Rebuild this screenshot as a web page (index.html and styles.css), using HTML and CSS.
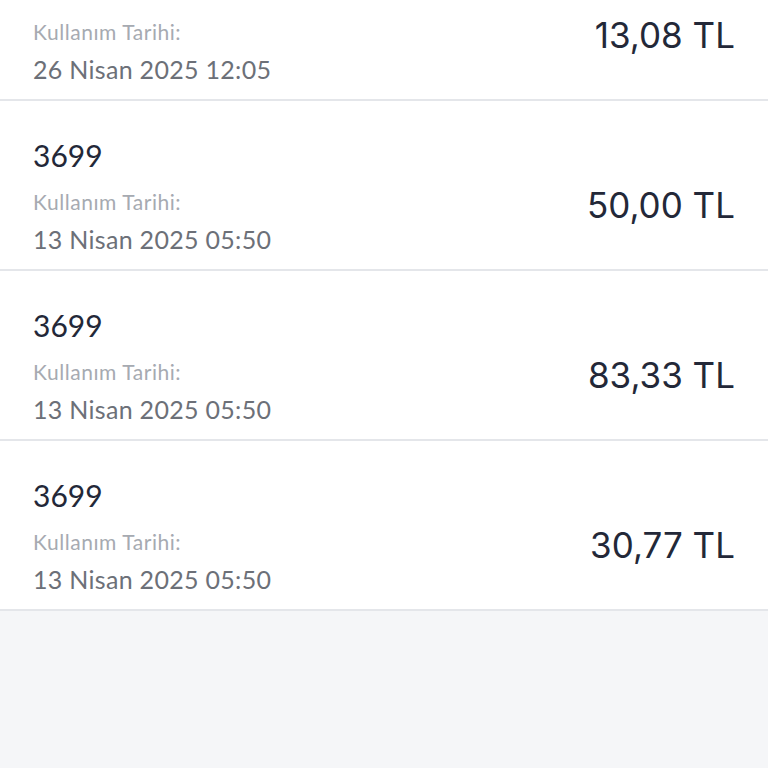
FILE: index.html
```html
<!DOCTYPE html>
<html lang="tr">
<head>
<meta charset="utf-8">
<link rel="stylesheet" href="styles.css">
</head>
<body>
<div class="list">
  <div class="row">
    <div class="title">3699</div>
    <div class="label">Kullanım Tarihi:</div>
    <div class="date">26 Nisan 2025 12:05</div>
    <div class="amount">13,08 TL</div>
  </div>
  <div class="row">
    <div class="title">3699</div>
    <div class="label">Kullanım Tarihi:</div>
    <div class="date">13 Nisan 2025 05:50</div>
    <div class="amount">50,00 TL</div>
  </div>
  <div class="row">
    <div class="title">3699</div>
    <div class="label">Kullanım Tarihi:</div>
    <div class="date">13 Nisan 2025 05:50</div>
    <div class="amount">83,33 TL</div>
  </div>
  <div class="row">
    <div class="title">3699</div>
    <div class="label">Kullanım Tarihi:</div>
    <div class="date">13 Nisan 2025 05:50</div>
    <div class="amount">30,77 TL</div>
  </div>
</div>
</body>
</html>
```
FILE: styles.css
```css
html, body {
  margin: 0;
  padding: 0;
  background: #f5f6f8;
  height: 100%;
  overflow: hidden;
}
.list {
  margin-top: -69px;
  background: #ffffff;
}
.row {
  display: grid;
  grid-template-columns: 1fr auto;
  grid-template-rows: 47px 36px 38px;
  padding: 36px 33px 11px 33px;
  border-bottom: 2px solid #e4e6ea;
  font-family: "Lato", "Noto Sans", sans-serif;
}
.title {
  grid-column: 1;
  grid-row: 1;
  font-size: 30px;
  line-height: 36px;
  color: #232838;
}
.label {
  grid-column: 1;
  grid-row: 2;
  font-size: 21px;
  letter-spacing: 0.55px;
  line-height: 36px;
  color: #a6aab1;
}
.date {
  grid-column: 1;
  grid-row: 3;
  font-size: 25px;
  letter-spacing: 0.3px;
  line-height: 38px;
  color: #6c7078;
}
.amount {
  grid-column: 2;
  grid-row: 2;
  align-self: center;
  font-family: "Inter", "Noto Sans", sans-serif;
  font-size: 35px;
  line-height: 42px;
  margin-top: 6px;
  color: #232838;
}
```
